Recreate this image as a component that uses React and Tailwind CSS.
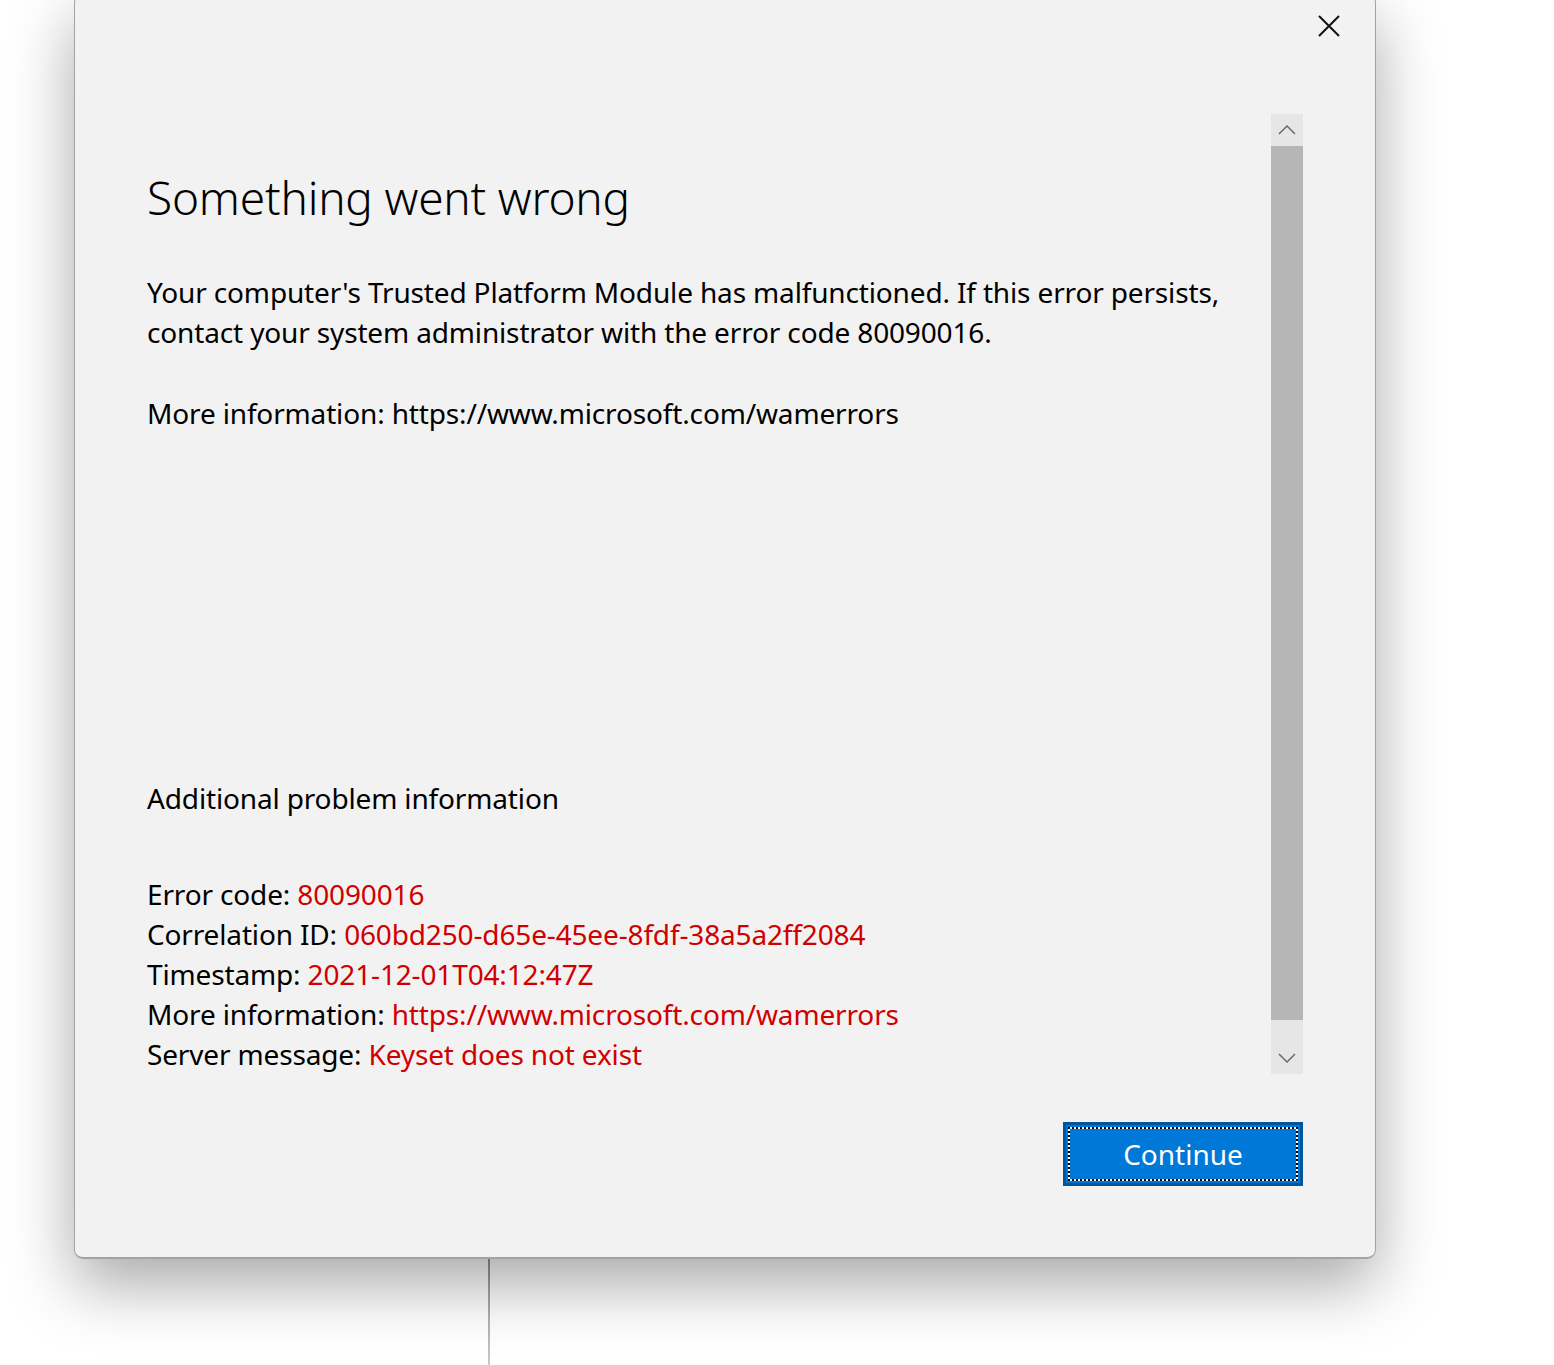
const details = [
  { label: 'Error code:', value: '80090016' },
  { label: 'Correlation ID:', value: '060bd250-d65e-45ee-8fdf-38a5a2ff2084' },
  { label: 'Timestamp:', value: '2021-12-01T04:12:47Z' },
  { label: 'More information:', value: 'https://www.microsoft.com/wamerrors' },
  { label: 'Server message:', value: 'Keyset does not exist' },
]

function Scrollbar() {
  return (
    <div className="flex h-[960px] w-[32px] shrink-0 flex-col bg-[#e6e6e6]">
      <div className="flex h-[32px] items-center justify-center">
        <svg width="18" height="10" viewBox="0 0 18 10" fill="none">
          <path d="M1 9 L9 1 L17 9" stroke="#6b6b6b" strokeWidth="1.5" />
        </svg>
      </div>
      <div className="h-[874px] bg-[#b6b6b6]" />
      <div className="flex-1" />
      <div className="flex h-[32px] items-center justify-center">
        <svg width="18" height="10" viewBox="0 0 18 10" fill="none">
          <path d="M1 1 L9 9 L17 1" stroke="#6b6b6b" strokeWidth="1.5" />
        </svg>
      </div>
    </div>
  )
}

export default function App() {
  return (
    <div
      className="relative h-[1365px] w-[1554px] overflow-hidden bg-white text-black"
      style={{ fontFamily: '"Noto Sans", "Open Sans", sans-serif' }}
    >
      <div className="absolute left-[488px] top-[1250px] h-[115px] w-[2px] bg-gradient-to-b from-[#8e8e8e] to-[#c9c9c9]" />

      <div className="relative ml-[74px] mt-[-6px] flex h-[1265px] w-[1302px] flex-col rounded-[9px] border border-b-2 border-[#a3a3a3] bg-[#f2f2f2] shadow-[0_26px_64px_rgba(0,0,0,0.34)]">
        <div className="flex h-[119px] shrink-0 justify-end pr-[35px] pt-[20px]">
          <svg width="22" height="22" viewBox="0 0 22 22" fill="none">
            <path d="M1 1 L21 21 M21 1 L1 21" stroke="#111" strokeWidth="2" />
          </svg>
        </div>

        <div className="flex h-[960px] shrink-0 pl-[72px] pr-[72px]">
          <div className="flex-1 whitespace-nowrap text-[28px] leading-[40px] tracking-[-0.15px]">
            <h1 className="mt-[53px] text-[46px] font-light leading-[60px] tracking-[-0.2px]">
              Something went wrong
            </h1>
            <p className="mt-[45px]">
              Your computer's Trusted Platform Module has malfunctioned. If this error persists,
              <br />
              contact your system administrator with the error code 80090016.
            </p>
            <p className="mt-[41px]">More information: https://www.microsoft.com/wamerrors</p>
            <p className="mt-[345px]">Additional problem information</p>
            <div className="mt-[56px]">
              {details.map((row) => (
                <div key={row.label}>
                  {row.label} <span className="text-[#d10000]">{row.value}</span>
                </div>
              ))}
            </div>
          </div>
          <Scrollbar />
        </div>

        <div className="flex justify-end pr-[72px] pt-[48px]">
          <button
            type="button"
            className="relative h-[64px] w-[240px] border-[3px] border-[#00569c] bg-[#0078d7] text-[28px] text-white"
          >
            <span className="absolute inset-[2px] border-2 border-white" />
            <span className="absolute inset-[2px] border-2 border-dotted border-black" />
            <span className="relative">Continue</span>
          </button>
        </div>
      </div>
    </div>
  )
}
